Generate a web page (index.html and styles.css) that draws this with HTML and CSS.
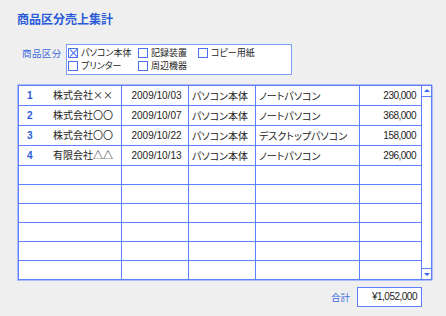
FILE: index.html
```html
<!DOCTYPE html>
<html lang="ja">
<head>
  <meta charset="UTF-8" />
  <title>商品区分売上集計</title>
  <link rel="stylesheet" href="styles.css">
</head>
<body>
  <h1 class="title">商品区分売上集計</h1>

  <div class="filter">
    <span class="filter-label">商品区分</span>
    <div class="filter-box">
      <label class="check"><span class="box checked"></span>パソコン本体</label>
      <label class="check"><span class="box"></span>記録装置</label>
      <label class="check"><span class="box"></span>コピー用紙</label>
      <label class="check"><span class="box"></span>プリンター</label>
      <label class="check"><span class="box"></span>周辺機器</label>
    </div>
  </div>

  <div class="list">
    <table class="sales">
      <colgroup>
        <col style="width:103px">
        <col style="width:67px">
        <col style="width:67px">
        <col style="width:104px">
        <col style="width:62px">
      </colgroup>
      <tbody id="rows"></tbody>
    </table>
    <div class="scrollbar">
      <div class="scroll-btn up"></div>
      <div class="scroll-track"></div>
      <div class="scroll-btn down"></div>
    </div>
  </div>

  <div class="total">
    <span class="total-label">合計</span>
    <div class="total-box">¥1,052,000</div>
  </div>

  <script>
    const sales = [
      { no: 1, name: "株式会社××", date: "2009/10/03", cat: "パソコン本体", item: "ノートパソコン", amount: "230,000" },
      { no: 2, name: "株式会社〇〇", date: "2009/10/07", cat: "パソコン本体", item: "ノートパソコン", amount: "368,000" },
      { no: 3, name: "株式会社〇〇", date: "2009/10/22", cat: "パソコン本体", item: "デスクトップパソコン", amount: "158,000" },
      { no: 4, name: "有限会社△△", date: "2009/10/13", cat: "パソコン本体", item: "ノートパソコン", amount: "296,000" }
    ];

    const tbody = document.getElementById("rows");
    for (let i = 0; i < 10; i++) {
      const s = sales[i];
      const tr = document.createElement("tr");
      if (s) {
        tr.innerHTML =
          `<td><span class="no">${s.no}</span>${s.name}</td>` +
          `<td class="date">${s.date}</td>` +
          `<td>${s.cat}</td>` +
          `<td>${s.item}</td>` +
          `<td class="amount">${s.amount}</td>`;
      } else {
        tr.innerHTML = "<td></td><td></td><td></td><td></td><td></td>";
      }
      tbody.appendChild(tr);
    }
  </script>
</body>
</html>
```

FILE: styles.css
```css
body {
  margin: 0;
  background-color: #efefef;
  color: #222;
  font-family: "Noto Sans CJK JP", "Liberation Sans", sans-serif;
  font-size: 10px;
}

.title {
  margin: 0;
  padding: 11px 0 0 17px;
  height: 19px;
  font-size: 12px;
  font-weight: bold;
  line-height: 16px;
  color: #2a5bd8;
}

.filter {
  display: flex;
  align-items: flex-start;
  margin-top: 14px;
  padding-left: 22px;
}

.filter-label {
  width: 44px;
  margin-top: 2px;
  font-size: 9.5px;
  letter-spacing: 0.4px;
  line-height: 14px;
  color: #3a6ae0;
}

.filter-box {
  display: grid;
  grid-template-columns: 70px 60px 1fr;
  grid-auto-rows: 13px;
  width: 222px;
  height: 26px;
  padding: 1px 1px 2px 1px;
  background: #fff;
  border: 1px solid #7c9cff;
  font-feature-settings: "palt";
}

.check {
  display: flex;
  align-items: center;
  gap: 3px;
  font-size: 9px;
  line-height: 13px;
  white-space: nowrap;
}

.box {
  flex: none;
  width: 8px;
  height: 8px;
  border: 1px solid #4d70f0;
  background: #fff;
  position: relative;
}

.box.checked::before,
.box.checked::after {
  content: "";
  position: absolute;
  left: 4px;
  top: -1px;
  width: 1px;
  height: 10px;
  background: #4d70f0;
  transform: rotate(45deg);
}

.box.checked::after {
  transform: rotate(-45deg);
}

.list {
  display: flex;
  margin: 9px 0 0 17px;
  width: 414px;
  border: 1px solid #a8bcff;
  border-right: none;
}

.sales {
  border-collapse: collapse;
  table-layout: fixed;
  width: 403px;
  background: #fff;
  font-feature-settings: "palt";
}

.sales td {
  height: 18px;
  padding: 0 0 0 3px;
  border: 1px solid #5e80ff;
  white-space: nowrap;
  overflow: hidden;
  line-height: 18px;
}

.no {
  display: inline-block;
  width: 26px;
  padding-left: 5px;
  font-family: "Liberation Sans", sans-serif;
  font-weight: bold;
  color: #2a5bd8;
}

.date {
  text-align: center;
  font-family: "Liberation Sans", sans-serif;
}

.amount {
  text-align: right;
  padding-right: 5px !important;
  font-family: "Liberation Sans", sans-serif;
  letter-spacing: -0.5px;
}

.scrollbar {
  display: flex;
  flex-direction: column;
  width: 9px;
  background: #fff;
  border: 1px solid #5e80ff;
  border-left: none;
  box-shadow: 1px 0 0 #a8bcff;
}

.scroll-btn {
  height: 10px;
  border-bottom: 1px solid #5e80ff;
  position: relative;
}

.scroll-btn.down {
  border-bottom: none;
  border-top: 1px solid #5e80ff;
}

.scroll-btn::after {
  content: "";
  position: absolute;
  left: 2px;
  top: 3px;
  border-left: 3px solid transparent;
  border-right: 3px solid transparent;
  border-bottom: 3px solid #3a66f0;
}

.scroll-btn.down::after {
  top: 4px;
  border-bottom: none;
  border-top: 3px solid #3a66f0;
}

.scroll-track {
  flex: 1;
}

.total {
  display: flex;
  align-items: center;
  justify-content: flex-end;
  gap: 7px;
  width: 422px;
  margin-top: 6px;
}

.total-label {
  font-size: 9.5px;
  color: #3a6ae0;
}

.total-box {
  width: 59px;
  height: 18px;
  padding-right: 4px;
  background: #fff;
  border: 1px solid #5e80ff;
  text-align: right;
  line-height: 18px;
  font-family: "Liberation Sans", sans-serif;
  letter-spacing: -0.5px;
}
```
